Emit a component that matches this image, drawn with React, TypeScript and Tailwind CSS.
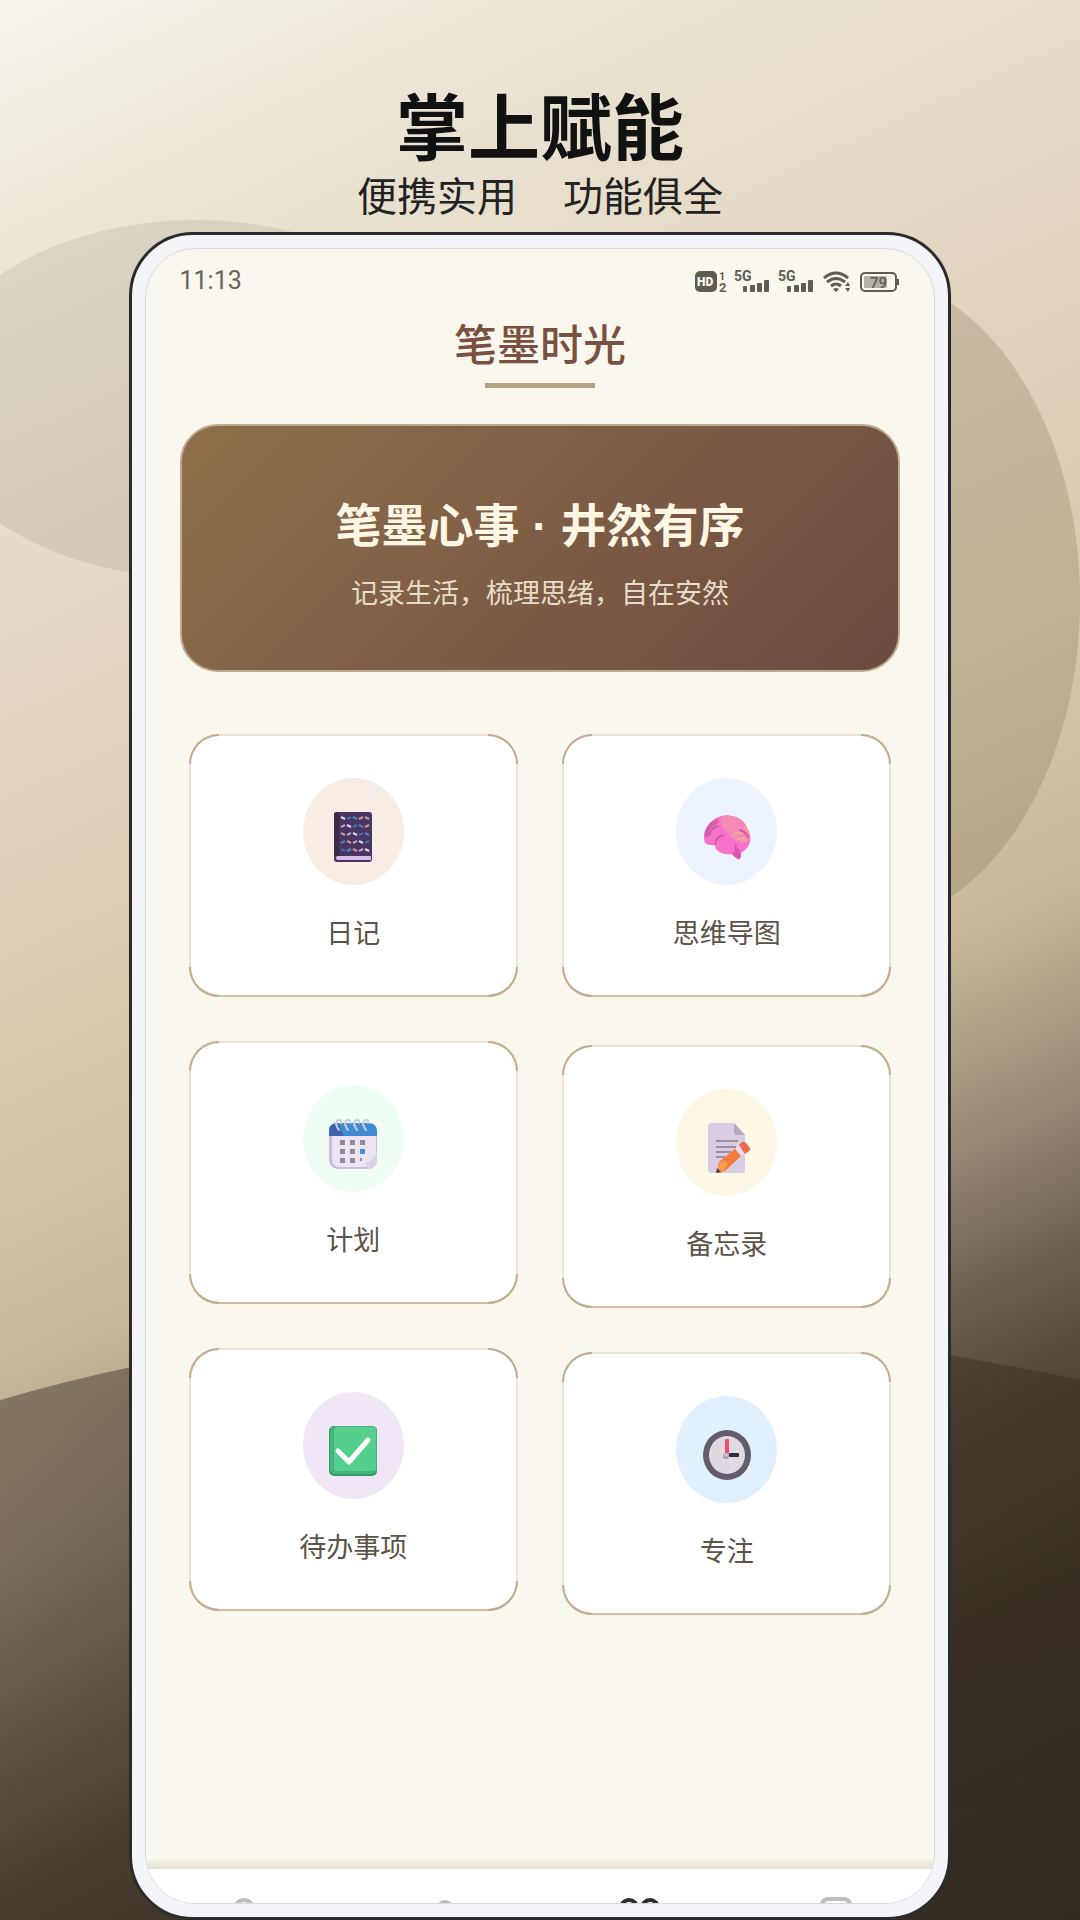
import type { ReactNode } from 'react';

type Feature = {
  label: string;
  tint: string;
  icon: ReactNode;
};

function Backdrop() {
  return (
    <svg
      className="absolute inset-0 h-full w-full"
      viewBox="0 0 1080 1920"
      preserveAspectRatio="none"
      aria-hidden="true"
    >
      <defs>
        <linearGradient id="sand" gradientUnits="userSpaceOnUse" x1="0" y1="0" x2="922" y2="1993">
          <stop offset="0" stopColor="#f6f3ec" />
          <stop offset="0.15" stopColor="#e9e1d0" />
          <stop offset="0.3" stopColor="#e1d5c0" />
          <stop offset="0.44" stopColor="#dacaae" />
          <stop offset="0.57" stopColor="#c8b898" />
          <stop offset="0.66" stopColor="#948873" />
          <stop offset="0.72" stopColor="#6c6150" />
          <stop offset="0.78" stopColor="#4d4335" />
          <stop offset="0.86" stopColor="#392f24" />
          <stop offset="1" stopColor="#332b21" />
        </linearGradient>
        <linearGradient id="hill" gradientUnits="userSpaceOnUse" x1="0" y1="1400" x2="0" y2="1900">
          <stop offset="0" stopColor="#352c20" stopOpacity="0.45" />
          <stop offset="1" stopColor="#352c20" stopOpacity="0.15" />
        </linearGradient>
      </defs>
      <rect width="1080" height="1920" fill="url(#sand)" />
      <ellipse cx="196" cy="399" rx="272" ry="179" fill="#6b625c" fillOpacity="0.13" />
      <ellipse cx="860" cy="600" rx="220" ry="326" fill="#6e6040" fillOpacity="0.22" />
      <path d="M0 1400Q500 1256 1080 1380V1920H0Z" fill="url(#hill)" />
    </svg>
  );
}

function StatusIcons() {
  return (
    <svg width="206" height="26" viewBox="0 0 206 26" fill="#5f5c54" fontFamily="Roboto, sans-serif" aria-hidden="true">
      <rect x="1" y="3" width="22" height="21" rx="5" />
      <text x="3" y="18" fontSize="12" fontWeight="900" fill="#faf7ee">HD</text>
      <text x="25" y="12" fontSize="11" fontWeight="700">1</text>
      <text x="25" y="24" fontSize="13" fontWeight="700">2</text>
      {[40, 84].map((x) => (
        <g key={x}>
          <text x={x} y="13" fontSize="14" fontWeight="700">5G</text>
          <rect x={x + 9} y="18" width="4" height="6" rx="1" />
          <rect x={x + 16} y="17" width="5" height="7" rx="1" />
          <rect x={x + 23} y="15" width="5" height="9" rx="1" />
          <rect x={x + 30} y="12" width="5" height="12" rx="1" />
        </g>
      ))}
      <g fill="none" stroke="#5f5c54" strokeWidth="3">
        <path d="M130 10Q142 0 154 10" />
        <path d="M133 14Q142 7 151 14" />
        <path d="M137 18Q142 14 147 18" />
      </g>
      <path d="M139 21Q142 19 145 21L142 24ZM151 18L154 14L156 18ZM151 20H156L154 24Z" />
      <rect x="167" y="5" width="35" height="18" rx="4" fill="none" stroke="#5f5c54" strokeWidth="2" />
      <rect x="170" y="8" width="23" height="12" rx="1" fill="#b3b1aa" />
      <rect x="203" y="11" width="2" height="6" />
      <text x="176" y="20" fontSize="15" fontWeight="500">79</text>
    </svg>
  );
}

function DiaryIcon() {
  const inks = ['#e3d5ee', '#4f83c9', '#b9a0c8', '#3f6fb5', '#c79a90'];
  return (
    <svg width="48" height="50" viewBox="0 0 48 50">
      <rect x="5" width="38" height="50" rx="3" fill="#4a3460" />
      <path d="M8 0H10V44H5V3Q5 0 8 0Z" fill="#3a2c46" />
      <path d="M8 44H42V48H8Q6 46 8 44Z" fill="#d4bce4" />
      {[0, 1, 2, 3, 4].map((row) =>
        [0, 1, 2, 3, 4].map((col) => {
          const x = 14 + col * 6;
          const y = 6 + row * 8;
          const tilt = (row + col) % 2 ? 1 : -1;
          return (
            <path
              key={`${row}-${col}`}
              d={`M${x - 2} ${y + tilt}L${x + 2} ${y - tilt}`}
              stroke={inks[(row * 2 + col * 3) % 5]}
              strokeWidth="2"
            />
          );
        })
      )}
    </svg>
  );
}

function BrainIcon() {
  return (
    <svg width="48" height="50" viewBox="0 0 48 50">
      <path d="M1 27C0 20 4 13 9 9C14 4 22 2 29 4C37 5 43 11 45 18C49 24 48 33 42 38L38 41L37 47Q34 48 29 42Q20 43 15 39Q12 37 12 33Q6 34 2 31Z" fill="#f573ca" />
      <path d="M18 5C25 2 37 4 42 13Q48 20 46 28Q40 34 36 29Q27 28 25 20Q17 17 18 5Z" fill="#f58bb4" />
      <path d="M2 25C1 19 5 12 10 9Q14 6 16 8Q14 13 9 15Q6 18 5 25Z" fill="#cf62a0" />
      <path d="M6 23Q8 16 15 14M12 32Q13 25 20 23M37 18Q43 20 45 25M33 33Q31 38 37 44" fill="none" stroke="#d758aa" strokeWidth="2" strokeLinecap="round" />
      <path d="M31 23Q35 19 39 22M34 28Q40 24 43 29M42 15L44 19" fill="none" stroke="#f4a79f" strokeWidth="2" strokeLinecap="round" />
      <path d="M29 42L35 36L38 41L37 47Q34 48 29 42Z" fill="#e053b4" />
    </svg>
  );
}

function CalendarIcon() {
  return (
    <svg width="48" height="50" viewBox="0 0 48 50">
      <rect y="4" width="48" height="46" rx="9" fill="#c9bfd9" />
      <path d="M3 16H47V38L37 48H11Q3 48 3 40Z" fill="#ece4f1" />
      <path d="M0 17V11Q1 4 9 4H39Q47 4 48 11V17Z" fill="#418bd2" />
      <path d="M0 17V11Q1 4 9 4L15 17Z" fill="#3d62b0" />
      <path d="M48 33V40Q47 48 38 50Q40 46 36 44Q45 42 48 33Z" fill="#ddd0e8" />
      {[10, 19, 28, 37].map((x) => (
        <path key={x} d={`M${x - 3} 6Q${x - 3} 1 ${x} 1Q${x + 3} 1 ${x + 2} 4M${x - 3} 4Q${x - 2} 9 ${x} 11`} fill="none" stroke="#c8ccda" strokeWidth="2" strokeLinecap="round" />
      ))}
      {[11, 21, 31].map((x) =>
        [21, 30, 39].map((y) => (
          <rect
            key={`${x}-${y}`}
            x={x}
            y={y}
            width={x === 31 && y === 39 ? 2 : 5}
            height={x === 31 && y === 39 ? 3 : 5}
            fill={x === 31 && y === 30 ? '#3f92d8' : '#918a9b'}
          />
        ))
      )}
    </svg>
  );
}

function MemoIcon() {
  return (
    <svg width="48" height="50" viewBox="0 0 48 50">
      <path d="M8 0H31L42 12V47Q42 50 39 50H8Q5 50 5 47V3Q5 0 8 0Z" fill="#d9cde3" />
      <path d="M31 0L42 12H34Q31 12 31 9Z" fill="#b7abc2" />
      <path d="M13 18H35M13 24H33M13 29H28M13 34H22" stroke="#98909f" strokeWidth="2" />
      <path d="M16 39L33 25L39 32L22 48L14 50Z" fill="#f47a3f" />
      <path d="M16 40L22 37L25 41L20 49L14 50Z" fill="#fb9a4a" />
      <path d="M14 45L18 49L13 50Z" fill="#4b3d46" />
      <path d="M32 26L36 22L42 30L38 33Z" fill="#e6dcec" />
      <path d="M36 22L39 19Q41 18 43 20L47 25Q48 27 46 28L42 31Z" fill="#ee6b4a" />
    </svg>
  );
}

function CheckIcon() {
  return (
    <svg width="48" height="50" viewBox="0 0 48 50">
      <rect width="48" height="50" rx="5" fill="#35996a" />
      <rect x="1" width="47" height="48" rx="5" fill="#43b57c" />
      <rect x="5" y="1" width="42" height="44" rx="3" fill="#55cf8c" />
      <path d="M9 25L20 36L39 14" fill="none" stroke="#fff" strokeWidth="5" strokeLinecap="round" strokeLinejoin="round" />
    </svg>
  );
}

function ClockIcon() {
  return (
    <svg width="48" height="50" viewBox="0 0 48 50">
      <ellipse cx="24" cy="25" rx="24" ry="25" fill="#625d69" />
      <ellipse cx="24" cy="25" rx="18" ry="19" fill="#dfdae1" />
      <rect x="22" y="9" width="4" height="15" rx="1" fill="#f04f74" />
      <rect x="26" y="23" width="10" height="4" rx="1" fill="#302b36" />
      <circle cx="23" cy="26" r="3" fill="#a29ba5" />
      <circle cx="23" cy="25" r="2" fill="#c8c2ca" />
    </svg>
  );
}

const LEFT_FEATURES: Feature[] = [
  { label: '日记', tint: 'bg-[#f8ede5]', icon: <DiaryIcon /> },
  { label: '计划', tint: 'bg-[#effdf4]', icon: <CalendarIcon /> },
  { label: '待办事项', tint: 'bg-[#f1e6f5]', icon: <CheckIcon /> },
];

const RIGHT_FEATURES: Feature[] = [
  { label: '思维导图', tint: 'bg-[#ecf4ff]', icon: <BrainIcon /> },
  { label: '备忘录', tint: 'bg-[#fdf7e5]', icon: <MemoIcon /> },
  { label: '专注', tint: 'bg-[#e1f0ff]', icon: <ClockIcon /> },
];

function FeatureCard({ label, tint, icon }: Feature) {
  return (
    <button
      type="button"
      className="relative flex w-full flex-col items-center rounded-[30px] border-2 border-[#e9e3d7] border-b-[#cdbda3] bg-white pt-[42px] pb-[41px]"
    >
      {/* Darker rounded corners over the light border */}
      <span className="absolute -top-0.5 -left-0.5 size-[30px] rounded-tl-[30px] border-t-2 border-l-2 border-[#c2ad90]" />
      <span className="absolute -top-0.5 -right-0.5 size-[30px] rounded-tr-[30px] border-t-2 border-r-2 border-[#c2ad90]" />
      <span className="absolute -bottom-0.5 -left-0.5 size-[30px] rounded-bl-[30px] border-b-2 border-l-2 border-[#c2ad90]" />
      <span className="absolute -right-0.5 -bottom-0.5 size-[30px] rounded-br-[30px] border-r-2 border-b-2 border-[#c2ad90]" />

      <span className={`flex h-[107px] w-[101px] items-center justify-center rounded-[50%] pt-2.5 ${tint}`}>
        {icon}
      </span>
      <span className="mt-[29px] text-[27px] leading-10 text-[#5d5347]">{label}</span>
    </button>
  );
}

const NAV_ITEMS = [
  { label: '首页', icon: <circle cx="20" cy="12" r="9" fill="none" stroke="#bcbcbc" strokeWidth="4" /> },
  { label: '发现', icon: <circle cx="24" cy="12" r="7" fill="#bcbcbc" stroke="#bcbcbc" strokeWidth="4" /> },
  {
    label: '功能',
    icon: (
      <g fill="none" stroke="#2c2c2c" strokeWidth="4">
        <circle cx="10" cy="11" r="8" />
        <circle cx="31" cy="11" r="8" />
      </g>
    ),
  },
  { label: '我的', icon: <rect x="6" y="2" width="28" height="28" rx="6" fill="none" stroke="#bcbcbc" strokeWidth="4" /> },
];

export default function App() {
  return (
    <div className="relative flex min-h-screen flex-col overflow-hidden font-['Liberation_Sans','Noto_Sans_CJK_SC',sans-serif]">
      <Backdrop />

      <header className="relative pt-[90px] text-center text-[#111]">
        <h1 className="text-[72px] leading-[78px] font-bold">掌上赋能</h1>
        <p className="flex justify-center gap-[46px] text-[40px] leading-[58px] text-[#222]">
          <span>便携实用</span>
          <span>功能俱全</span>
        </p>
      </header>

      {/* Phone */}
      <div className="relative mx-[11.9%] mt-1.5 flex flex-1 flex-col rounded-[64px] border-3 border-[#2b2b2e] bg-[#f5f5f9] p-[13px]">
        <div className="flex flex-1 flex-col overflow-hidden rounded-[50px] border border-[#d9dcdc] bg-[#faf7ee]">
          <div className="flex h-16 items-center justify-between px-[34px]">
            <span className="font-[Roboto,sans-serif] text-[25px] text-[#66645d]">11:13</span>
            <StatusIcons />
          </div>

          <div className="flex flex-col items-center">
            <h2 className="text-[43px] leading-[66px] font-medium text-[#7a5040]">笔墨时光</h2>
            <div className="mt-1 h-[5px] w-[110px] bg-[#b5a286]" />
          </div>

          <section className="mx-[34px] mt-9 rounded-[38px] border-2 border-[#bfa98e] bg-linear-135 from-[#8d6e49] from-5% via-[#7e5d46] via-50% to-[#6c4a3e] pt-[72px] pb-[56px] text-center">
            <h3 className="text-[46px] leading-[56px] font-bold text-[#fff6e3]">笔墨心事 · 井然有序</h3>
            <p className="mt-5 text-[27px] leading-10 text-[#e8dcc8]">记录生活，梳理思绪，自在安然</p>
          </section>

          <main className="mt-[62px] grid grid-cols-2 gap-[44px] px-[43px]">
            <div className="flex flex-col gap-[44px]">
              {LEFT_FEATURES.map((feature) => (
                <FeatureCard key={feature.label} {...feature} />
              ))}
            </div>
            <div className="flex flex-col gap-[44px] [&>*:first-child]:mb-1">
              {RIGHT_FEATURES.map((feature) => (
                <FeatureCard key={feature.label} {...feature} />
              ))}
            </div>
          </main>

          <div className="mt-auto h-[9px] bg-linear-to-b from-[#f5f1e6] to-[#e5e0d3]" />
          <nav className="grid h-[34px] grid-cols-4 overflow-hidden bg-white pt-7">
            {NAV_ITEMS.map((item) => (
              <button key={item.label} type="button" aria-label={item.label} className="flex justify-center">
                <svg width="40" height="40" viewBox="0 0 40 40" className="shrink-0">
                  {item.icon}
                </svg>
              </button>
            ))}
          </nav>
        </div>
      </div>
    </div>
  );
}
